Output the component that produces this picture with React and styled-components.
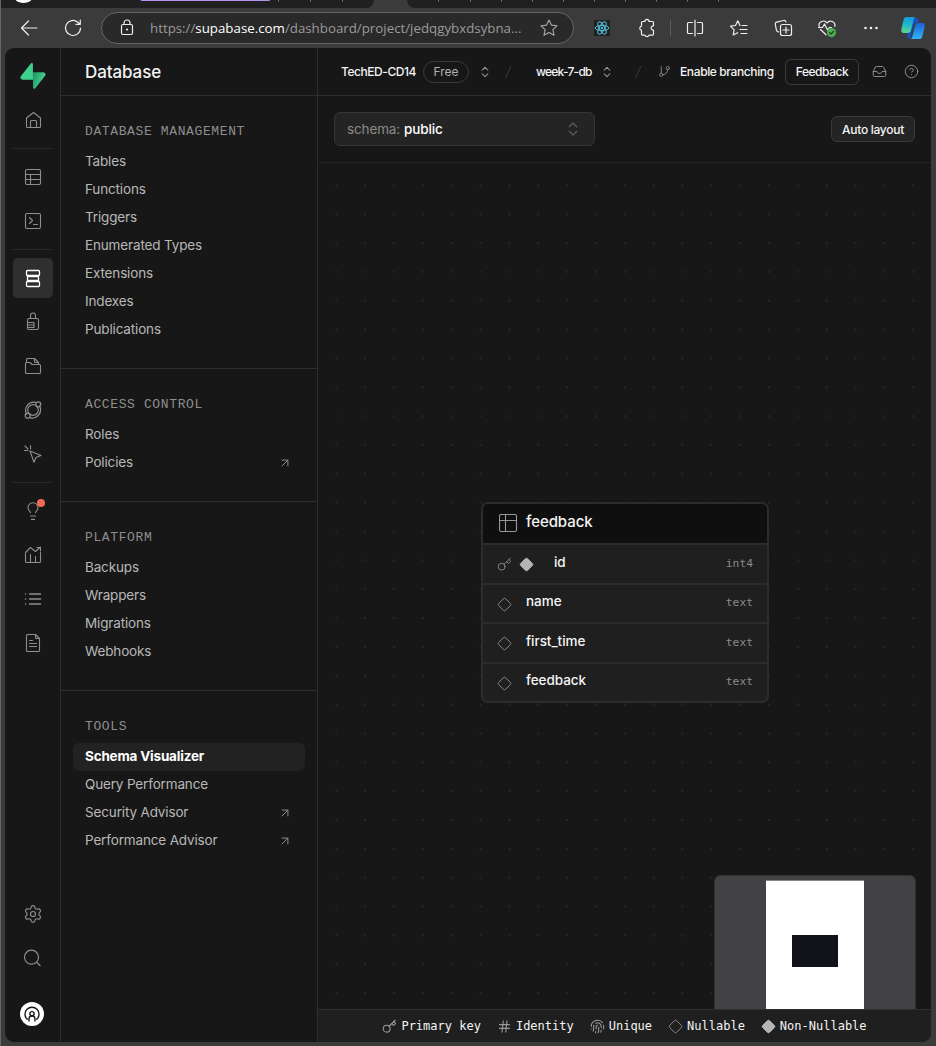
import React from "react";
import styled, { createGlobalStyle, css } from "styled-components";
import {
  ArrowUpRight,
  ChevronsUpDown,
  CircleQuestionMark,
  Diamond,
  Fingerprint,
  GitBranch,
  Hash,
  Inbox,
  Key,
  Lightbulb,
  Settings,
} from "lucide-react";

const sans = `Inter, "Liberation Sans", sans-serif`;
const mono = `"DejaVu Sans Mono", "Liberation Mono", monospace`;

const GlobalStyle = createGlobalStyle`
  * { box-sizing: border-box; }
  body { margin: 0; background: #3b3b3b; font-family: ${sans}; color: #ededed; overflow: hidden; }
  svg { display: block; flex: none; }
`;

/* ---------- browser window ---------- */

const Window = styled.div`
  display: flex;
  flex-direction: column;
  width: 936px;
  height: 1046px;
  background: #3b3b3b;
  border-left: 1px solid #666;
  overflow: hidden;
`;
const TabStrip = styled.div`
  flex: none;
  height: 8px;
  display: flex;
  justify-content: space-between;
`;
const TabRun = styled.div`
  width: ${(p) => p.$w}px;
  height: 8px;
  background: #202020;
  overflow: hidden;
  border-radius: ${(p) => (p.$side === "left" ? "0 0 8px 0" : "0 0 0 8px")};
`;
const Toolbar = styled.div`
  flex: none;
  height: 40px;
  display: flex;
  align-items: center;
  padding-left: 6px;
`;
const ToolSlot = styled.div`
  flex: none;
  width: ${(p) => p.$w || 44}px;
  height: 40px;
  display: flex;
  align-items: center;
  justify-content: center;
`;
const ToolDivider = styled.div`
  width: 1px;
  height: 16px;
  margin: 0 2px 0 1px;
  background: #5c5c5c;
`;
const AddressBar = styled.div`
  flex: none;
  display: flex;
  align-items: center;
  width: 473px;
  height: 32px;
  margin: 0 6px;
  padding: 0 12px 0 13px;
  border: 1px solid #666;
  border-radius: 16px;
  background: #292929;
`;
const Url = styled.div`
  width: 387px;
  flex: none;
  margin-left: 11px;
  font: 400 13.3px "Open Sans", sans-serif;
  color: #9a9a9a;
  white-space: nowrap;
  b { font-weight: 400; color: #fff; }
`;

/* ---------- app shell ---------- */

const Shell = styled.div`
  display: flex;
  width: 926px;
  height: 994px;
  margin-left: 4px;
  background: #171717;
  border-radius: 9px;
  overflow: hidden;
`;
const Rail = styled.nav`
  flex: none;
  display: flex;
  flex-direction: column;
  width: 56px;
  padding: 15px 7px 16px 8px;
  border-right: 1px solid #2e2e2e;
`;
const RailLogo = styled.div`
  height: 37px;
  padding-left: 7px;
`;
const RailGroup = styled.div`
  display: flex;
  flex-direction: column;
  gap: 4px;
  ${(p) => p.$divided && css`
    margin-top: 8px;
    padding-top: 8px;
    &::before {
      content: "";
      height: 1px;
      margin: -8px 1px 4px 0;
      background: #2a2a2a;
    }
  `}
`;
const RailButton = styled.div`
  position: relative;
  width: 40px;
  height: 40px;
  display: flex;
  align-items: center;
  justify-content: center;
  border-radius: 5px;
  color: ${(p) => (p.$active ? "#fff" : "#8e8e8e")};
  background: ${(p) => (p.$active ? "#2f2f2f" : "transparent")};
`;
const Alert = styled.i`
  position: absolute;
  top: 8px;
  right: 8px;
  width: 8px;
  height: 8px;
  border-radius: 50%;
  background: #f06a50;
`;
const RailFoot = styled.div`
  margin-top: auto;
  display: flex;
  flex-direction: column;
  gap: 4px;
`;
const Avatar = styled.div`
  width: 24px;
  height: 24px;
  margin: 20px 0 0 7px;
  border-radius: 50%;
  background: #fff;
  color: #171717;
`;

/* ---------- section menu ---------- */

const Menu = styled.aside`
  flex: none;
  width: 257px;
  border-right: 1px solid #2e2e2e;
`;
const MenuHeader = styled.div`
  height: 48px;
  padding-left: 24px;
  border-bottom: 1px solid #2e2e2e;
  font-size: 17px;
  font-weight: 500;
  letter-spacing: -0.1px;
  line-height: 49px;
  color: #f2f2f2;
`;
const MenuSection = styled.div`
  padding: 24px 12px;
  & + & { border-top: 1px solid #2e2e2e; }
`;
const MenuTitle = styled.div`
  height: 28px;
  padding-left: 12px;
  font: 400 13px/23px "Liberation Mono", monospace;
  letter-spacing: 0.62px;
  color: #8e8e8e;
`;
const MenuItem = styled.div`
  display: flex;
  align-items: center;
  justify-content: space-between;
  height: 28px;
  padding: 0 13px 0 12px;
  border-radius: 6px;
  font-size: 13.5px;
  letter-spacing: ${(p) => (p.$active ? -0.2 : -0.15)}px;
  font-weight: ${(p) => (p.$active ? 650 : 430)};
  color: ${(p) => (p.$active ? "#fff" : "#b8b8b8")};
  background: ${(p) => (p.$active ? "#222" : "transparent")};
  span { padding-bottom: 2px; }
  svg { color: #8e8e8e; }
`;

/* ---------- main column ---------- */

const Main = styled.main`
  flex: 1;
  min-width: 0;
  display: flex;
  flex-direction: column;
`;
const TopBar = styled.header`
  flex: none;
  display: flex;
  align-items: center;
  height: 48px;
  padding: 0 0 0 23px;
  border-bottom: 1px solid #2e2e2e;
  color: #8a8a8a;
`;
const Crumb = styled.span`
  flex: none;
  width: ${(p) => p.$w}px;
  font-size: 12px;
  font-weight: 550;
  letter-spacing: ${(p) => p.$ls}px;
  color: #f4f4f4;
  white-space: nowrap;
`;
const BranchLabel = styled(Crumb)`
  margin-left: 9px;
`;
const Pill = styled.span`
  flex: none;
  width: 46px;
  height: 22px;
  margin: 0 9px 0 7px;
  border: 1px solid #3a3a3a;
  border-radius: 11px;
  font-size: 12px;
  line-height: 20px;
  text-align: center;
  color: #b0b0b0;
`;
const Slash = styled.svg`
  margin: ${(p) => p.$m};
`;
const Button = styled.button`
  flex: none;
  width: ${(p) => p.$w}px;
  height: 26px;
  padding: 0;
  border: 1px solid #3a3a3a;
  border-radius: 6px;
  background: ${(p) => (p.$filled ? "#242424" : "transparent")};
  font: 550 12px ${sans};
  letter-spacing: ${(p) => p.$ls}px;
  color: #f4f4f4;
  white-space: nowrap;
`;
const TopIcon = styled.span`
  flex: none;
  width: 32px;
  display: flex;
  justify-content: center;
  ${Button} + & { margin-left: 4px; }
`;
const Filters = styled.div`
  flex: none;
  display: flex;
  align-items: center;
  justify-content: space-between;
  height: 67px;
  padding: 0 16px;
  border-bottom: 1px solid #232323;
`;
const Select = styled.div`
  display: flex;
  align-items: center;
  width: 261px;
  height: 34px;
  padding: 0 12px;
  border: 1px solid #363636;
  border-radius: 6px;
  background: #242424;
  font-size: 13.5px;
  letter-spacing: -0.13px;
  color: #8a8a8a;
  b { flex: 1; margin-left: 4px; font-weight: 550; color: #fff; }
`;
const Canvas = styled.section`
  position: relative;
  flex: 1;
  overflow: hidden;
`;
const DotGrid = styled.svg`
  width: 100%;
  height: 100%;
`;
const TableNode = styled.div`
  position: absolute;
  left: 163px;
  top: 339px;
  width: 288px;
  height: 201px;
  border: 2px solid #2c2c2c;
  border-radius: 7px;
  background: #1f1f1f;
  overflow: hidden;
`;
const NodeHeader = styled.div`
  display: flex;
  align-items: center;
  height: 39px;
  padding: 0 0 0 16px;
  gap: 8px;
  background: #0f0f0f;
  font-size: 15px;
  font-weight: 500;
  letter-spacing: -0.08px;
  color: #f4f4f4;
  svg { color: #989898; }
  span { margin-top: -4px; }
`;
const NodeRow = styled.div`
  display: flex;
  align-items: center;
  height: 39.5px;
  padding: 0 14px 2px 14px;
  border-top: 2px solid #2c2c2c;
`;
const Marks = styled.div`
  display: flex;
  gap: 6.5px;
  width: ${(p) => p.$w}px;
  padding-top: 4px;
  color: #858585;
`;
const ColumnName = styled.span`
  flex: 1;
  margin-top: -2px;
  font-size: 13.5px;
  font-weight: 500;
  letter-spacing: -0.05px;
  color: #f4f4f4;
`;
const ColumnType = styled.span`
  margin-top: 1px;
  font: 400 11.3px ${mono};
  color: #8a8a8a;
`;
const MiniMap = styled.div`
  position: absolute;
  left: 396px;
  top: 712px;
  width: 202px;
  height: 150px;
  padding: 5px 0 0 51px;
  border: 1px solid #303032;
  border-radius: 6px;
  background: #424245;
`;
const MiniViewport = styled.div`
  width: 98px;
  height: 140px;
  margin-top: -1px;
  padding: 54px 0 0 26px;
  border-top: 1px solid #85858a;
  background: #fff;
`;
const MiniNode = styled.div`
  width: 46px;
  height: 32px;
  background: #12131a;
`;
const Legend = styled.footer`
  flex: none;
  display: flex;
  align-items: center;
  justify-content: center;
  gap: 16px;
  height: 33px;
  border-top: 1px solid #2e2e2e;
  background: #1f1f1f;
  font: 400 12px ${mono};
  color: #f4f4f4;
`;
const LegendItem = styled.span`
  display: flex;
  align-items: center;
  gap: 4px;
  svg { color: #9a9a9a; margin-top: 1px; }
`;

/* ---------- icons ---------- */

const Icon = ({ children, size = 24, sw = 1.1, ...rest }) => (
  <svg width={size} height={size} viewBox={`0 0 ${size} ${size}`} fill="none" stroke="currentColor"
    strokeWidth={sw} strokeLinecap="round" strokeLinejoin="round" {...rest}>
    {children}
  </svg>
);

const HomeIcon = () => (
  <Icon><path d="M5.500 10 12.500 4.500l7 5.500v8.500a1 1 0 0 1-1 1h-12a1 1 0 0 1-1-1z" /><path d="M9.500 19.500v-6a1 1 0 0 1 1-1h4a1 1 0 0 1 1 1v6" /></Icon>
);
const TableIcon = () => (
  <Icon><rect x="4.500" y="4.500" width="15" height="15" rx="1.500" /><path d="M4.500 9.500h15M4.500 14.500h15M9.500 9.500v10" /></Icon>
);
const SqlIcon = () => (
  <Icon><rect x="4.500" y="4.500" width="15" height="15" rx="1.500" /><path d="m8.500 8.500 3 3-3 3M12.500 15.500h4" /></Icon>
);
const DatabaseIcon = () => (
  <Icon sw={1.3}><rect x="5.500" y="4.500" width="13" height="5" rx="1" /><rect x="5.500" y="15.500" width="13" height="5" rx="1" /><path d="M6.500 9.500v6M17.500 9.500v6M6.500 10.500h11M6.500 14.500h11" /></Icon>
);
const AuthIcon = () => (
  <Icon><rect x="6.500" y="8.500" width="11" height="11" rx="1.500" /><path d="M9.500 8.500v-3a2.500 2.500 0 0 1 5 0v3M7 12.500h6v5H7M7 15h6" /></Icon>
);
const StorageIcon = () => (
  <Icon><path d="M4.500 18.500v-9a1 1 0 0 1 1-1h3.500l2 2h7.500a1 1 0 0 1 1 1v7a1 1 0 0 1-1 1h-13a1 1 0 0 1-1-1z" /><path d="M5.500 8.500v-3a1 1 0 0 1 1-1h7l4 4v2M13.500 4.500v3a1 1 0 0 0 1 1h3" /></Icon>
);
const FunctionsIcon = () => (
  <Icon sw={1.2}><path d="M14.700 4.300a8.200 8.200 0 0 0-9 12M9.500 19.800a8.200 8.200 0 0 0 9-12" /><circle cx="12" cy="12" r="5.300" /><circle cx="17.300" cy="6.300" r="2.500" /><circle cx="6.700" cy="17.700" r="2.500" /></Icon>
);
const RealtimeIcon = () => (
  <Icon><path d="m9 9 11 4.500-5 2-2 4.800zM4 4l3 3M9.500 3.500v3.500M3.500 8.500h3.500" /></Icon>
);
const ReportsIcon = () => (
  <Icon><path d="M4.500 10.500v8a1 1 0 0 0 1 1h13a1 1 0 0 0 1-1v-9M9.500 11.500v8M14.500 13.500v6M4.500 9.500l5-5 5 4 5-4.500M16 4.500h3.500V8" /></Icon>
);
const LogsIcon = () => (
  <Icon sw={1.4}><path d="M8.500 7h11M8.500 12h11M8.500 17h11M4.500 7h.1M4.500 12h.1M4.500 17h.1" /></Icon>
);
const DocsIcon = () => (
  <Icon><path d="M5.500 19.500v-15a1 1 0 0 1 1-1h8l4 4v12a1 1 0 0 1-1 1h-11a1 1 0 0 1-1-1zM14.500 3.500v3a1 1 0 0 0 1 1h3M8.500 9.500h3M8.500 12.500h7M8.500 15.500h7" /></Icon>
);
const SearchIcon = () => (
  <Icon sw={1.2}><circle cx="10.500" cy="11.200" r="7" /><path d="m15.600 16.300 3.600 3.400" /></Icon>
);
const Logo = () => (
  <svg width="26" height="26" viewBox="0 0 109 113">
    <defs>
      <linearGradient id="bolt" x1="54" y1="55" x2="95" y2="72" gradientUnits="userSpaceOnUse">
        <stop stopColor="#249361" /><stop offset="1" stopColor="#3ecf8e" />
      </linearGradient>
    </defs>
    <path fill="url(#bolt)" d="M63.700 110.300c-2.900 3.600-8.700 1.600-8.700-3l-1-67.300h45.200c8.200 0 12.800 9.500 7.700 15.900z" />
    <path fill="#3ecf8e" d="M45.300 2.100c2.900-3.600 8.700-1.600 8.700 3l.5 67.200H9.800c-8.200 0-12.700-9.400-7.600-15.900z" />
  </svg>
);
const Podcast = () => (
  <Icon sw={1.4}><circle cx="12" cy="11.700" r="2.100" /><path d="M7.200 17.300a7 7 0 1 1 9.600 0M9 19v-2a3 3 0 0 1 6 0v2" /></Icon>
);
const NodeTableIcon = () => (
  <Icon size={19}><rect x=".5" y=".5" width="17" height="17" rx="1.500" /><path d="M.5 6.500h17M6.500.5v17" /></Icon>
);
const Chevrons = ({ color = "#9a9a9a", size = 14 }) => <ChevronsUpDown size={size} strokeWidth={1.8} color={color} />;
const Separator = ({ m }) => (
  <Slash $m={m} width="9" height="14" viewBox="0 0 9 14" stroke="#3c3c3c"><path d="M1.500 13 7 1" /></Slash>
);

const BackIcon = () => <Icon sw={1.2} color="#eee"><path d="M20 12H4.500M11.500 5 4.500 12l7 7" /></Icon>;
const ReloadIcon = () => <Icon sw={1.2} color="#eee"><path d="M19.500 12a7.500 7.500 0 1 1-2.700-5.800l2 1.800M19.300 4v4.300H15" /></Icon>;
const PadlockIcon = () => (
  <Icon sw={1.2} color="#eee"><rect x="6.500" y="8.500" width="11" height="10" rx="1.500" /><path d="M9 8.500V7a3 3 0 0 1 6 0v1.500" /><circle cx="12" cy="13.500" r=".5" fill="currentColor" /></Icon>
);
const StarIcon = () => (
  <Icon color="#a8a8a8"><path d="m12 4 2.400 5.100 5.600.7-4.100 3.900 1.100 5.500-5-2.700-5 2.700 1.100-5.500L4 9.800l5.600-.7z" /></Icon>
);
const ReactIcon = () => (
  <svg width="16" height="16" viewBox="0 0 16 16" fill="none" stroke="#53c1de">
    <rect width="16" height="16" fill="#202020" stroke="none" />
    <g><ellipse cx="8" cy="8" rx="6.800" ry="2.600" /><ellipse cx="8" cy="8" rx="6.800" ry="2.600" transform="rotate(60 8 8)" /><ellipse cx="8" cy="8" rx="6.800" ry="2.600" transform="rotate(120 8 8)" /></g>
    <circle cx="8" cy="8" r="1.200" fill="#53c1de" stroke="none" />
  </svg>
);
const PuzzleIcon = () => (
  <Icon sw={1.2} color="#eee"><path d="M7.500 5.500h2.300a2.100 2.100 0 0 1 4.200 0h3.500q1 0 1 1v3.300h-.7a2.200 2.200 0 0 0 0 4.300h.7v4q0 1-1 1H14a2.200 2.200 0 0 1-4.200 0H7.500q-1 0-1-1v-3.700a2.200 2.200 0 0 1 0-4.300V6.500q0-1 1-1z" /></Icon>
);
const SplitIcon = () => (
  <Icon sw={1.2} color="#eee"><path d="M9.500 6.500h-4a1 1 0 0 0-1 1v9a1 1 0 0 0 1 1h4M14.500 6.500h4a1 1 0 0 1 1 1v9a1 1 0 0 1-1 1h-4M12 4v16" /></Icon>
);
const FavoritesIcon = () => (
  <Icon sw={1.2} color="#eee"><path d="M13 9.500 10.800 4.800 8.500 9.500l-5 .7 3.600 3.600-.9 5.200 4.400-2.300M15 9.500h5M13 13.500h7M14 17.500h6" /></Icon>
);
const CollectionsIcon = () => (
  <Icon sw={1.2} color="#eee"><rect x="9.500" y="8.500" width="11" height="11" rx="2" /><path d="M15 11v6M12 14h6M7.500 15.800c-1 0-1.700-.5-2-1.500L4.300 8.500c-.2-1 .2-2 1.300-2.300l7-1.700c1.200-.3 2 .2 2.400 1.500" /></Icon>
);
const EssentialsIcon = () => (
  <Icon sw={1.2} color="#eee"><path d="M4.200 10.500C2.800 5.500 9.500 3.200 12 7c2.500-3.800 9-1.500 7.800 3.500M5.500 13.500l5.500 5.300M3.500 11.500h4l2-3.500 3 6 1.800-2.500h2" /><circle cx="16.500" cy="16.500" r="4.500" fill="#4caf50" stroke="none" /><path d="m14.600 16.600 1.400 1.400 2.500-2.700" stroke="#173b19" /></Icon>
);
const MoreIcon = () => (
  <Icon stroke="none" fill="#eee"><circle cx="6.500" cy="12" r="1.300" /><circle cx="12" cy="12" r="1.300" /><circle cx="17.500" cy="12" r="1.300" /></Icon>
);
const CopilotIcon = () => (
  <svg width="24" height="24" viewBox="0 0 24 24">
    <defs>
      <linearGradient id="cpA" x1="0" y1="0" x2="0" y2="1"><stop stopColor="#159bd8" /><stop offset=".5" stopColor="#20b9c9" /><stop offset="1" stopColor="#5fd68b" /></linearGradient>
      <linearGradient id="cpB" x1="0" y1="0" x2="0" y2="1"><stop stopColor="#1b62d6" /><stop offset="1" stopColor="#30b5f5" /></linearGradient>
    </defs>
    <path fill="#1650c4" d="M10 2h5c2 0 2.500 1 3 4l-5 2-4 15c-2 0-2.500-1-3-4z" />
    <path fill="url(#cpA)" d="M5.500 1H15c-1.500 0-2 1-2.500 3L10 14c-.6 2.400-2 3-4 3H3c-2.500 0-3.200-1.500-2.600-4L2.400 4.500C3 2 3.800 1 5.500 1z" />
    <path fill="url(#cpB)" d="M18.500 23H9c1.500 0 2-1 2.500-3L14 10c.6-2.400 2-3 4-3h3c2.500 0 3.200 1.500 2.600 4l-2 8.500c-.6 2.500-1.400 3.500-3.100 3.500z" />
  </svg>
);

/* ---------- data ---------- */

const sections = [
  { title: "DATABASE MANAGEMENT", items: [["Tables"], ["Functions"], ["Triggers"], ["Enumerated Types"], ["Extensions"], ["Indexes"], ["Publications"]] },
  { title: "ACCESS CONTROL", items: [["Roles"], ["Policies", "link"]] },
  { title: "PLATFORM", items: [["Backups"], ["Wrappers"], ["Migrations"], ["Webhooks"]] },
  { title: "TOOLS", items: [["Schema Visualizer", "active"], ["Query Performance"], ["Security Advisor", "link"], ["Performance Advisor", "link"]] },
];
const columns = [
  { name: "id", type: "int4", primary: true },
  { name: "name", type: "text" },
  { name: "first_time", type: "text" },
  { name: "feedback", type: "text" },
];
const ticks = [278, 310, 342];
const ticksRight = [438, 470, 501, 532, 563, 594, 625, 656, 687, 718];

const Mark = ({ filled }) => (
  <Diamond size={15} strokeWidth={1.6} color={filled ? "#b4b4b4" : "#8a8a8a"} fill={filled ? "#b4b4b4" : "none"} />
);

export default function App() {
  return (
    <Window>
      <GlobalStyle />
      <TabStrip>
        <TabRun $w={373} $side="left">
          <svg width="373" height="8">
            <ellipse cx="22.500" cy="-3" rx="9" ry="6" fill="#fff" />
            <path d="M139 0H269.500L268 1H141z" fill="#b294f0" />
            {ticks.map((x) => <rect key={x} x={x - 1} width="1" height="1.500" fill="#777" />)}
          </svg>
        </TabRun>
        <TabRun $w={529} $side="right">
          <svg width="529" height="8">
            {ticksRight.map((x) => <rect key={x} x={x - 407} width="1" height="1.500" fill="#777" />)}
          </svg>
        </TabRun>
      </TabStrip>
      <Toolbar>
        <ToolSlot><BackIcon /></ToolSlot>
        <ToolSlot><ReloadIcon /></ToolSlot>
        <AddressBar>
          <PadlockIcon />
          <Url>https://<b>supabase.com</b>/dashboard/project/jedqgybxdsybna...</Url>
          <StarIcon />
        </AddressBar>
        <ToolSlot><ReactIcon /></ToolSlot>
        <ToolSlot $w={45}><PuzzleIcon /></ToolSlot>
        <ToolDivider />
        <ToolSlot><SplitIcon /></ToolSlot>
        <ToolSlot><FavoritesIcon /></ToolSlot>
        <ToolSlot><CollectionsIcon /></ToolSlot>
        <ToolSlot><EssentialsIcon /></ToolSlot>
        <ToolSlot><MoreIcon /></ToolSlot>
        <ToolSlot $w={40}><CopilotIcon /></ToolSlot>
      </Toolbar>

      <Shell>
        <Rail>
          <RailLogo><Logo /></RailLogo>
          <RailGroup><RailButton><HomeIcon /></RailButton></RailGroup>
          <RailGroup $divided>
            <RailButton><TableIcon /></RailButton>
            <RailButton><SqlIcon /></RailButton>
          </RailGroup>
          <RailGroup $divided>
            <RailButton $active><DatabaseIcon /></RailButton>
            <RailButton><AuthIcon /></RailButton>
            <RailButton><StorageIcon /></RailButton>
            <RailButton><FunctionsIcon /></RailButton>
            <RailButton><RealtimeIcon /></RailButton>
          </RailGroup>
          <RailGroup $divided>
            <RailButton><Lightbulb size={20} strokeWidth={1.3} /><Alert /></RailButton>
            <RailButton><ReportsIcon /></RailButton>
            <RailButton><LogsIcon /></RailButton>
            <RailButton><DocsIcon /></RailButton>
          </RailGroup>
          <RailFoot>
            <RailButton><Settings size={20} strokeWidth={1.4} /></RailButton>
            <RailButton><SearchIcon /></RailButton>
            <Avatar><Podcast /></Avatar>
          </RailFoot>
        </Rail>

        <Menu>
          <MenuHeader>Database</MenuHeader>
          {sections.map((s) => (
            <MenuSection key={s.title}>
              <MenuTitle>{s.title}</MenuTitle>
              {s.items.map(([label, kind]) => (
                <MenuItem key={label} $active={kind === "active"}>
                  <span>{label}</span>
                  {kind === "link" && <ArrowUpRight size={14} strokeWidth={1.7} />}
                </MenuItem>
              ))}
            </MenuSection>
          ))}
        </Menu>

        <Main>
          <TopBar>
            <Crumb $w={75} $ls={-0.45}>TechED-CD14</Crumb>
            <Pill>Free</Pill>
            <Chevrons />
            <Separator m="0 23px 0 12px" />
            <Crumb $w={64} $ls={-0.75}>week-7-db</Crumb>
            <Chevrons />
            <Separator m="0 15px 0 20px" />
            <GitBranch size={13} strokeWidth={1.7} />
            <BranchLabel $w={105} $ls={-0.38}>Enable branching</BranchLabel>
            <Button $w={74} $ls={-0.45}>Feedback</Button>
            <TopIcon><Inbox size={15} strokeWidth={1.6} /></TopIcon>
            <TopIcon><CircleQuestionMark size={15} strokeWidth={1.6} /></TopIcon>
          </TopBar>
          <Filters>
            <Select>schema: <b>public</b><Chevrons color="#5a5a5a" size={18} /></Select>
            <Button $w={84} $ls={-0.28} $filled>Auto layout</Button>
          </Filters>
          <Canvas>
            <DotGrid>
              <defs>
                <pattern id="dots" x="17.300" y="21.300" width="28.850" height="28.850" patternUnits="userSpaceOnUse">
                  <circle cx="1" cy="1" r="1" fill="#2a2a2a" />
                </pattern>
              </defs>
              <rect width="100%" height="100%" fill="url(#dots)" />
            </DotGrid>
            <TableNode>
              <NodeHeader><NodeTableIcon /><span>feedback</span></NodeHeader>
              {columns.map((c) => (
                <NodeRow key={c.name}>
                  <Marks $w={c.primary ? 57 : 29}>
                    {c.primary ? <><Key size={15} strokeWidth={1.6} /><Mark filled /></> : <Mark />}
                  </Marks>
                  <ColumnName>{c.name}</ColumnName>
                  <ColumnType>{c.type}</ColumnType>
                </NodeRow>
              ))}
            </TableNode>
            <MiniMap><MiniViewport><MiniNode /></MiniViewport></MiniMap>
          </Canvas>
          <Legend>
            <LegendItem><Key size={15} strokeWidth={1.7} />Primary key</LegendItem>
            <LegendItem><Hash size={15} strokeWidth={1.7} />Identity</LegendItem>
            <LegendItem><Fingerprint size={15} strokeWidth={1.7} />Unique</LegendItem>
            <LegendItem><Mark />Nullable</LegendItem>
            <LegendItem><Mark filled />Non-Nullable</LegendItem>
          </Legend>
        </Main>
      </Shell>
    </Window>
  );
}
